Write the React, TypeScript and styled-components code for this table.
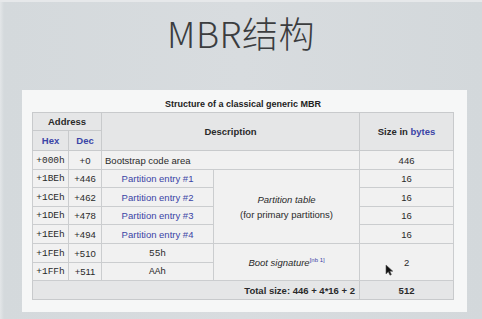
import React from 'react'
import styled, { createGlobalStyle } from 'styled-components'

const GlobalStyle = createGlobalStyle`
  html, body {
    margin: 0;
    padding: 0;
    background: #d6dadd;
  }
`

interface IPartition {
  hex: string
  dec: string
  label: string
}

const partitions: IPartition[] = [
  { hex: '+1BEh', dec: '+446', label: 'Partition entry #1' },
  { hex: '+1CEh', dec: '+462', label: 'Partition entry #2' },
  { hex: '+1DEh', dec: '+478', label: 'Partition entry #3' },
  { hex: '+1EEh', dec: '+494', label: 'Partition entry #4' },
]

const App: React.FC = () => {
  return (
    <Slide>
      <GlobalStyle />
      <Title>MBR结构</Title>
      <Panel>
        <Table>
          <Caption>Structure of a classical generic MBR</Caption>
          <colgroup>
            <col style={{ width: 36 }} />
            <col style={{ width: 33 }} />
            <col style={{ width: 112 }} />
            <col style={{ width: 146 }} />
            <col style={{ width: 94 }} />
          </colgroup>
          <thead>
            <Row $h={18}>
              <Head colSpan={2}>Address</Head>
              <Head colSpan={2} rowSpan={2}>
                Description
              </Head>
              <Head rowSpan={2}>
                Size in <Link>bytes</Link>
              </Head>
            </Row>
            <Row $h={20}>
              <Head>
                <Link>Hex</Link>
              </Head>
              <Head>
                <Link>Dec</Link>
              </Head>
            </Row>
          </thead>
          <tbody>
            <Row $h={19}>
              <Mono>+000h</Mono>
              <Cell $align="center">+0</Cell>
              <Cell colSpan={2}>Bootstrap code area</Cell>
              <Cell $align="center">446</Cell>
            </Row>
            {partitions.map((p, i) => (
              <Row key={p.hex} $h={i % 2 === 0 ? 18 : 19}>
                <Mono>{p.hex}</Mono>
                <Cell $align="center">{p.dec}</Cell>
                <Cell $align="center">
                  <Link>{p.label}</Link>
                </Cell>
                {i === 0 ? (
                  <Note rowSpan={4}>
                    Partition table
                    <br />
                    <Plain>(for primary partitions)</Plain>
                  </Note>
                ) : null}
                <Cell $align="center">16</Cell>
              </Row>
            ))}
            <Row $h={19}>
              <Mono>+1FEh</Mono>
              <Cell $align="center">+510</Cell>
              <Mono>55h</Mono>
              <Note rowSpan={2}>
                Boot signature<Sup>[nb 1]</Sup>
              </Note>
              <Cell $align="center" rowSpan={2}>
                2
              </Cell>
            </Row>
            <Row $h={18}>
              <Mono>+1FFh</Mono>
              <Cell $align="center">+511</Cell>
              <Mono>AAh</Mono>
            </Row>
            <Row $h={19}>
              <Total colSpan={4}>Total size: 446 + 4*16 + 2</Total>
              <Total $center>512</Total>
            </Row>
          </tbody>
        </Table>
      </Panel>
      <Cursor width="9" height="12" viewBox="0 0 9 12">
        <path d="M1 1 L1 10 L3.3 7.8 L5 11.2 L6.4 10.5 L4.8 7.2 L7.8 7.2 Z" fill="#111" stroke="#555" strokeWidth="0.6" />
      </Cursor>
    </Slide>
  )
}

const Slide = styled.div`
  position: relative;
  width: 482px;
  height: 319px;
  overflow: hidden;
  display: flex;
  flex-direction: column;
  background: linear-gradient(90deg, #e3e6e8 0, #d4d9dc 4px, #d8dcdf 50%, #d3d8db 100%);
  border-top: 2px solid #e6e8ea;
  box-sizing: border-box;
`

const Title = styled.h1`
  margin: 10px 0 0;
  height: 40px;
  text-align: center;
  font-family: 'Noto Sans CJK SC', 'Noto Sans', sans-serif;
  font-weight: 300;
  font-size: 36px;
  line-height: 40px;
  color: #3b3d3f;
  letter-spacing: 0.5px;
`

const Panel = styled.div`
  margin: 38px 0 0 22px;
  width: 445px;
  height: 222px;
  box-sizing: border-box;
  padding: 0 14px 0 10px;
  background: #f6f7f7;
`

const Table = styled.table`
  border-collapse: collapse;
  table-layout: fixed;
  width: 421px;
  background: #f1f1f1;
  font-family: 'Liberation Sans', Arial, sans-serif;
  font-size: 9.5px;
  color: #2a2a2a;
`

const Caption = styled.caption`
  height: 22px;
  line-height: 28px;
  font-weight: bold;
  font-size: 9px;
  color: #222;
`

const Row = styled.tr<{ $h: number }>`
  height: ${(p) => p.$h}px;
`

const Head = styled.th`
  border: 1px solid #c8cacc;
  background: #e5e6e7;
  padding: 0 3px;
  font-weight: bold;
  text-align: center;
`

const Cell = styled.td<{ $align?: string }>`
  border: 1px solid #cbcdcf;
  padding: 0 3px;
  text-align: ${(p) => p.$align || 'left'};
  white-space: nowrap;
`

const Mono = styled.td`
  border: 1px solid #cbcdcf;
  padding: 0;
  text-align: center;
  font-family: 'Liberation Mono', 'Courier New', monospace;
  font-size: 9.5px;
  white-space: nowrap;
`

const Note = styled.td`
  border: 1px solid #cbcdcf;
  padding: 0 3px;
  text-align: center;
  font-style: italic;
  line-height: 15px;
  white-space: nowrap;
`

const Plain = styled.span`
  font-style: normal;
`

const Total = styled.td<{ $center?: boolean }>`
  border: 1px solid #c8cacc;
  background: #e5e6e7;
  padding: 0 4px;
  font-weight: bold;
  text-align: ${(p) => (p.$center ? 'center' : 'right')};
`

const Link = styled.span`
  color: #3a44a6;
`

const Sup = styled.sup`
  color: #3a44a6;
  font-style: normal;
  font-size: 6px;
`

const Cursor = styled.svg`
  position: absolute;
  left: 385px;
  top: 262px;
`

export default App
